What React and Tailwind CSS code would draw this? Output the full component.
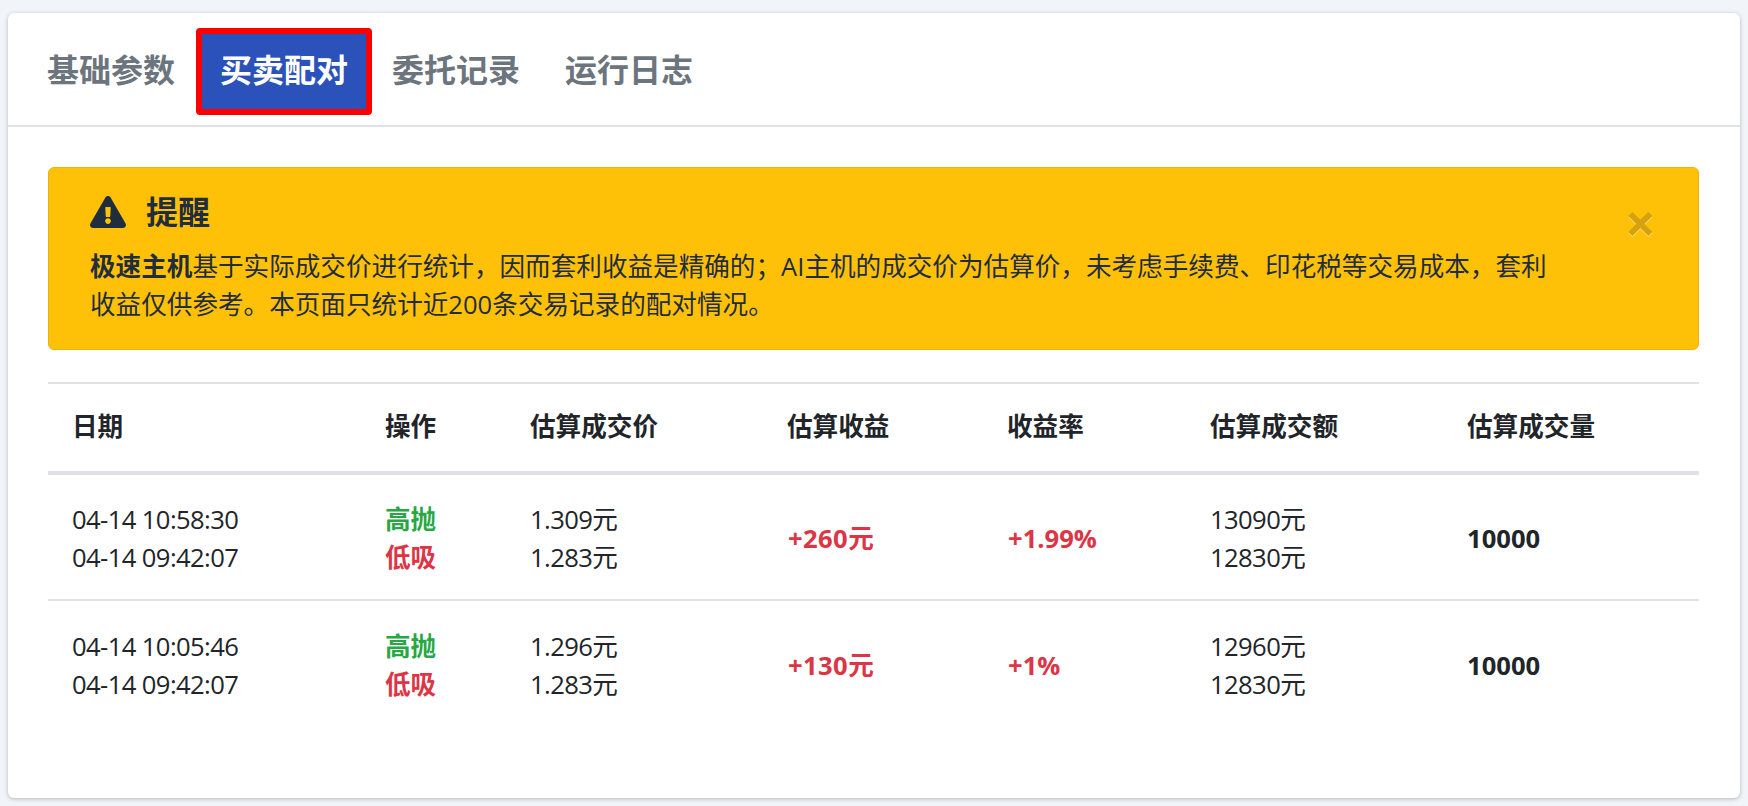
const FONT = '"Open Sans","Noto Sans CJK SC",sans-serif';

function Triangle() {
  return (
    <svg width="36" height="32" viewBox="0 0 576 512" className="shrink-0">
      <path fill="#1f2d3d" d="M569.5 440C588 472 564.8 512 527.9 512H48.1c-36.9 0-60-40-41.6-72L246.4 24c18.5-32 64.7-32 83.2 0l239.9 416zM288 354c-25.4 0-46 20.6-46 46s20.6 46 46 46 46-20.6 46-46-20.6-46-46-46zm-43.7-165.4l7.4 136c.3 6.4 5.6 11.4 12 11.4h48.5c6.4 0 11.6-5 12-11.4l7.4-136c.4-6.9-5.1-12.6-12-12.6h-63.9c-6.9 0-12.4 5.8-12 12.6z" />
    </svg>
  );
}

const rows = [
  { t: ['04-14 10:58:30', '04-14 09:42:07'], p: ['1.309元', '1.283元'], g: '+260元', r: '+1.99%', a: ['13090元', '12830元'] },
  { t: ['04-14 10:05:46', '04-14 09:42:07'], p: ['1.296元', '1.283元'], g: '+130元', r: '+1%', a: ['12960元', '12830元'] },
];

const heads = ['日期', '操作', '估算成交价', '估算收益', '收益率', '估算成交额', '估算成交量'];
const widths = ['w-[312px]', 'w-[145px]', 'w-[257px]', 'w-[220px]', 'w-[203px]', 'w-[257px]', 'w-[257px]'];

export default function App() {
  return (
    <div className="min-h-[806px] bg-[#f1f4f8] px-2 pt-[13px] pb-2 text-[#212529] text-[25.6px] leading-[38.4px]" style={{ fontFamily: FONT }}>
      <div className="h-[785px] rounded-[6px] bg-white shadow-[0_1px_4px_rgba(0,0,0,0.25)]">
        <div className="flex h-[114px] items-start border-b-2 border-[#dee2e6] pl-[21px] pt-[15px] text-[32px] font-bold leading-[48px] text-[#6c757d]">
          <div className="px-[18px] pt-[18px]">基础参数</div>
          <div className="ml-[3px] flex h-[87px] items-center rounded-[4px] border-[6px] border-[#ff0000] bg-[#2b52bb] px-[18px] pb-[3px] text-white">买卖配对</div>
          <div className="pl-[20px] pr-[22px] pt-[18px]">委托记录</div>
          <div className="pl-[23px] pr-[20px] pt-[18px]">运行日志</div>
        </div>
        <div className="pl-10 pr-[41px] pt-[40px]">
          <div className="relative h-[183px] rounded-[6px] border border-[#ecb40a] bg-[#ffc107] pl-[41px] pr-[139px] pt-[24px] text-[#1f2d3d]">
            <div className="flex items-center gap-[20px] text-[32px] font-bold leading-[40px]">
              <Triangle />
              <span>提醒</span>
            </div>
            <p className="mt-[16px] leading-[38px]">
              <b>极速主机</b>基于实际成交价进行统计，因而套利收益是精确的；AI主机的成交价为估算价，未考虑手续费、印花税等交易成本，套利收益仅供参考。本页面只统计近200条交易记录的配对情况。
            </p>
            <span className="absolute right-[42px] top-[30px] text-[54px] font-bold leading-[48px] text-[#d4a20f] [text-shadow:0_1px_0_rgba(255,255,255,0.5)]">×</span>
          </div>
          <table className="mt-[32px] w-[1651px] table-fixed border-t-2 border-[#dee2e6]">
            <thead>
              <tr className="h-[90px] border-b-[4px] border-[#dee2e6]">
                {heads.map((h, i) => (
                  <th key={h} className={`${widths[i]} ${i === 0 ? 'pl-[24px]' : 'pl-[25px]'} text-left font-bold`}>{h}</th>
                ))}
              </tr>
            </thead>
            <tbody>
              {rows.map((row, i) => (
                <tr key={i} className={i === 0 ? 'h-[127px] border-b-2 border-[#dee2e6]' : 'h-[127px]'}>
                  <td className="pl-[24px] pt-[4px] tracking-[-0.6px]">{row.t.map((x) => <div key={x}>{x}</div>)}</td>
                  <td className="pl-[25px] pt-[4px] font-bold">
                    <div className="text-[#28a745]">高抛</div>
                    <div className="text-[#dc3545]">低吸</div>
                  </td>
                  <td className="pl-[25px] pt-[4px] tracking-[-0.6px]">{row.p.map((x) => <div key={x}>{x}</div>)}</td>
                  <td className="pl-[26px] pt-[4px] font-bold tracking-[0.4px] text-[#dc3545]">{row.g}</td>
                  <td className="pl-[26px] pt-[4px] font-bold text-[#dc3545]">{row.r}</td>
                  <td className="pl-[25px] pt-[4px] tracking-[-0.6px]">{row.a.map((x) => <div key={x}>{x}</div>)}</td>
                  <td className="pl-[25px] pt-[4px] font-bold">10000</td>
                </tr>
              ))}
            </tbody>
          </table>
        </div>
      </div>
    </div>
  );
}
